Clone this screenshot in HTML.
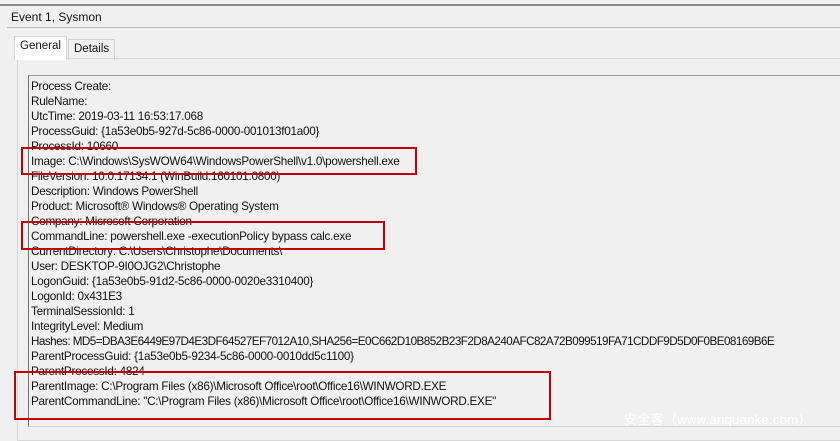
<!DOCTYPE html>
<html><head><meta charset="utf-8"><style>
body{margin:0;width:840px;height:439px;background:#f0f0f0;position:relative;overflow:hidden;font-family:"Liberation Sans","Noto Sans CJK SC",sans-serif;color:#111;}
.top{position:absolute;left:0;top:4px;width:840px;height:2px;background:#8a8a8a}
.title{position:absolute;left:11px;top:10px;font-size:12px}
.tline{position:absolute;left:7px;top:27px;width:833px;height:1px;background:#b5b5b5}
.tab{position:absolute;font-size:11.5px;border:1px solid #d0d0d0;border-bottom:none;padding:3px 5px}
.panel{position:absolute;left:17px;top:58px;width:830px;height:381px;border:1px solid #d8d8d8;background:#f0f0f0}
.box{position:absolute;left:28px;top:75px;width:812px;height:350px;border-left:1px solid #707070;border-top:1px solid #a0a0a0;border-bottom:1px solid #d0d0d0}
.lines{position:absolute;left:31px;top:79px;font-size:11.7px;line-height:15px;letter-spacing:-0.25px;white-space:pre}
.h{letter-spacing:-0.55px}
.red{position:absolute;border:2px solid #c00000}
.wm{position:absolute;left:624px;top:409px;font-size:13px;color:#fff;letter-spacing:0.3px}
</style></head><body>
<div class="top"></div>
<div class="title">Event 1, Sysmon</div>
<div class="tline"></div>
<div class="panel"></div>
<div class="tab" style="left:14px;top:36px;height:17px;background:#fff;z-index:2;border-color:#d8d8d8">General</div>
<div class="tab" style="left:68px;top:39px;height:14px;">Details</div>
<div class="box"></div>
<div class="lines">Process Create:
RuleName:
UtcTime: 2019-03-11 16:53:17.068
ProcessGuid: {1a53e0b5-927d-5c86-0000-001013f01a00}
ProcessId: 10660
Image: C:\Windows\SysWOW64\WindowsPowerShell\v1.0\powershell.exe
FileVersion: 10.0.17134.1 (WinBuild.160101.0800)
Description: Windows PowerShell
Product: Microsoft® Windows® Operating System
Company: Microsoft Corporation
CommandLine: powershell.exe -executionPolicy bypass calc.exe
CurrentDirectory: C:\Users\Christophe\Documents\
User: DESKTOP-9I0OJG2\Christophe
LogonGuid: {1a53e0b5-91d2-5c86-0000-0020e3310400}
LogonId: 0x431E3
TerminalSessionId: 1
IntegrityLevel: Medium
<span class="h">Hashes: MD5=DBA3E6449E97D4E3DF64527EF7012A10,SHA256=E0C662D10B852B23F2D8A240AFC82A72B099519FA71CDDF9D5D0F0BE08169B6E</span>
ParentProcessGuid: {1a53e0b5-9234-5c86-0000-0010dd5c1100}
ParentProcessId: 4824
ParentImage: C:\Program Files (x86)\Microsoft Office\root\Office16\WINWORD.EXE
ParentCommandLine: "C:\Program Files (x86)\Microsoft Office\root\Office16\WINWORD.EXE"</div>
<div class="red" style="left:21px;top:147px;width:392px;height:24px"></div>
<div class="red" style="left:21px;top:221px;width:360px;height:25px"></div>
<div class="red" style="left:14px;top:371px;width:533px;height:45px"></div>
<div class="wm">安全客（www.anquanke.com）</div>
</body></html>
